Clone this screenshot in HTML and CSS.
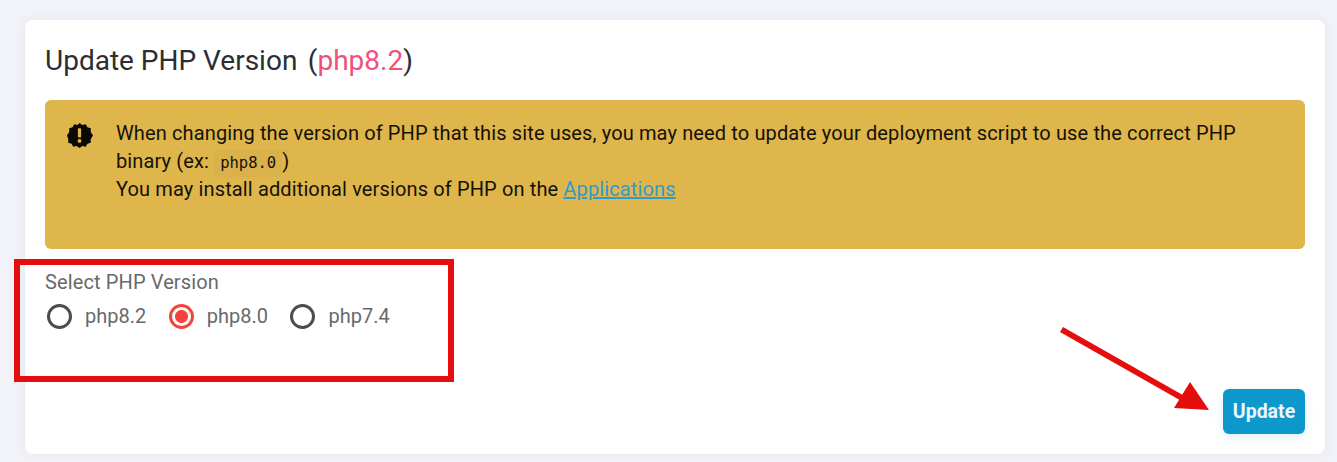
FILE: index.html
```html
<!DOCTYPE html>
<html lang="en">
<head>
<meta charset="utf-8">
<title>Update PHP Version</title>
<link rel="stylesheet" href="styles.css">
</head>
<body>
<main class="card">
  <h2 class="title">Update PHP Version <span class="paren">(<span class="current">php8.2</span>)</span></h2>
  <div class="alert">
    <svg class="alert-icon" viewBox="0 0 28 28" aria-hidden="true">
      <path class="badge" d="M14 1l3 2.200 3.500-.9 1.700 3.200 3.500.9-.1 3.600 2.400 4-2.400 4 .1 3.600-3.500.9-1.700 3.200-3.500-.9-3 2.200-3-2.200-3.500.9-1.700-3.200-3.500-.9.100-3.600L1 14l2.400-4-.1-3.600 3.500-.9 1.700-3.200 3.500.9z"/>
      <rect class="mark" x="12.300" y="6.500" width="3.400" height="9.500" rx="1"/>
      <circle class="mark" cx="14" cy="19.600" r="2"/>
    </svg>
    <div class="alert-text">
      When changing the version of PHP that this site uses, you may need to update your deployment script to use the correct PHP binary (ex: <code class="code">php8.0</code>)<br>
      You may install additional versions of PHP on the <a class="link" href="#">Applications</a>
    </div>
  </div>
  <div class="field">
    <div class="field-label">Select PHP Version</div>
    <div class="radios">
      <label class="radio"><span class="dot"></span>php8.2</label>
      <label class="radio"><span class="dot dot-on"></span>php8.0</label>
      <label class="radio"><span class="dot"></span>php7.4</label>
    </div>
  </div>
  <div class="actions"><button class="btn" type="button">Update</button></div>
</main>
<div class="box-mark"></div>
<svg class="arrow-mark" viewBox="0 0 160 100" aria-hidden="true">
  <polygon points="4,1 1,6 126,77 129,72" class="arrow-head"/>
  <polygon points="150,84 115,82 131,56" class="arrow-head"/>
</svg>
</body>
</html>
```
FILE: styles.css
```css
* { box-sizing: border-box; }
html, body { margin: 0; height: 100%; }
body {
  position: relative;
  height: 462px;
  overflow: hidden;
  padding: 20px 12px 8px 25px;
  background: #f2f3f8;
  font-family: Roboto, "Liberation Sans", sans-serif;
}
.card {
  height: 434px;
  padding: 20px;
  background: #fff;
  border-radius: 8px;
  box-shadow: 0 0 12px rgba(80, 90, 130, 0.08);
  display: flex;
  flex-direction: column;
}
.title {
  margin: 0;
  height: 60px;
  padding-top: 5px;
  font-size: 28px;
  line-height: 32px;
  font-weight: 400;
  color: #2c2e33;
}
.paren { margin-left: 3.500px; }
.current { color: #f0507c; }
.alert {
  height: 149px;
  padding: 19px 20px 0 21px;
  display: flex;
  gap: 23px;
  background: #dfb64b;
  border-radius: 6px;
}
.alert-icon { width: 27px; height: 27px; flex: none; margin-top: 3px; }
.badge { fill: #0b0903; }
.mark { fill: #dfb64b; }
.alert-text {
  font-size: 20px;
  line-height: 28px;
  letter-spacing: 0.13px;
  color: #14110a;
}
.code {
  padding: 4px 6px 5px 6px;
  font-family: "DejaVu Sans Mono", "Liberation Mono", monospace;
  font-size: 15.500px;
  line-height: 20px;
  letter-spacing: 0;
  background: #dab14a;
  border-radius: 3px;
}
.link { color: #2f9bd0; }
.field { margin-top: 21px; color: #68696b; }
.field-label { font-size: 20px; line-height: 24px; letter-spacing: 0.12px; }
.radios { display: flex; gap: 22.500px; margin-top: 9px; padding-left: 2px; }
.radio { display: flex; align-items: center; gap: 13px; font-size: 20px; line-height: 26px; }
.dot {
  width: 25px;
  height: 25px;
  border: 3px solid #4a4c50;
  border-radius: 50%;
}
.dot-on {
  border-color: #f4433b;
  background: radial-gradient(circle, #f4433b 0 6px, #fff 7px);
}
.actions { margin-top: auto; display: flex; justify-content: flex-end; }
.btn {
  width: 82px;
  height: 45px;
  padding: 0;
  border: 0;
  border-radius: 6px;
  background: #0d98cc;
  color: #eaf6fb;
  font-family: inherit;
  font-size: 19.500px;
  font-weight: 700;
  box-shadow: 0 4px 12px rgba(13, 152, 207, 0.12);
}
.box-mark {
  position: absolute;
  left: 14px;
  top: 259px;
  width: 440px;
  height: 123px;
  border: 6px solid #e60d0d;
}
.arrow-mark {
  position: absolute;
  left: 1059px;
  top: 326px;
  width: 160px;
  height: 100px;
}
.arrow-head { fill: #e60d0d; }
```
